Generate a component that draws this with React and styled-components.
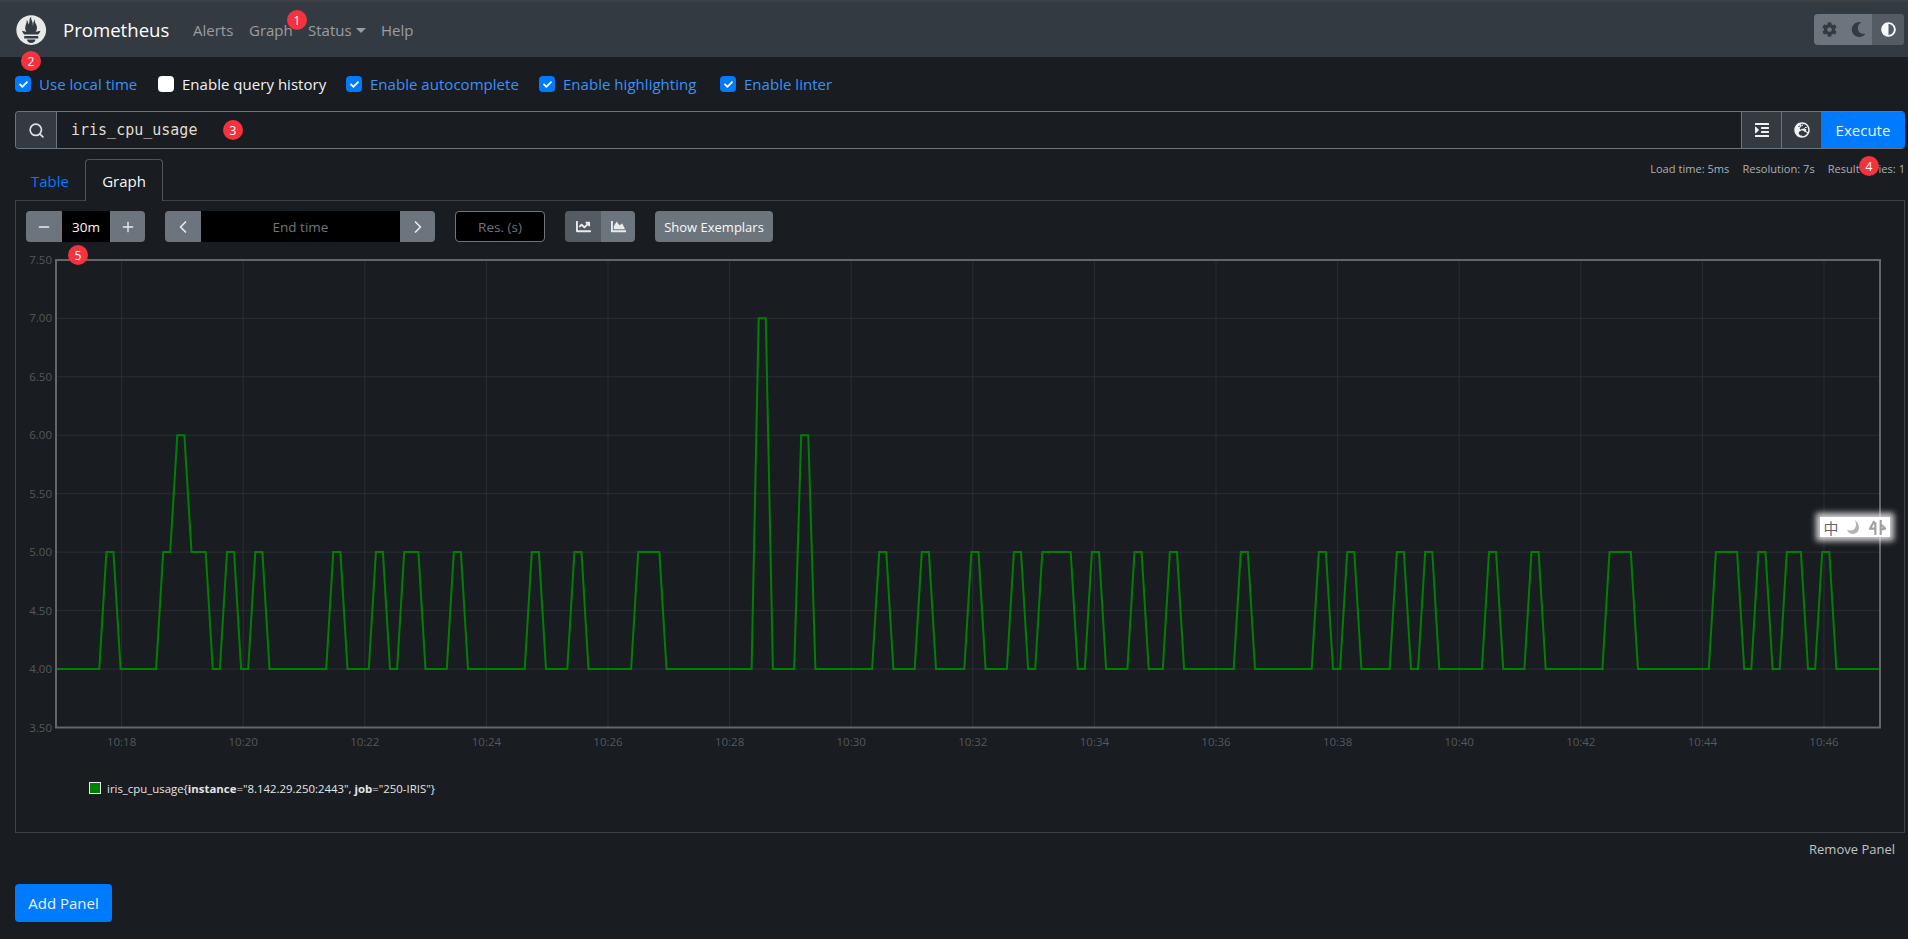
import React from 'react';
import styled, { createGlobalStyle } from 'styled-components';
import {
  FaAdjust, FaChartArea, FaChartLine, FaCheck, FaCog, FaGlobeEurope, FaIndent, FaMoon,
} from 'react-icons/fa';
import { ChevronLeft, ChevronRight, Minus, Plus, Search } from 'lucide-react';

const GlobalStyle = createGlobalStyle`
  html, body { margin: 0; padding: 0; background: #191c21; }
  body {
    font-family: "Open Sans", "Noto Sans", "Liberation Sans", sans-serif;
    font-size: 16px;
    color: #f8f9fa;
    overflow: hidden;
  }
  * { box-sizing: border-box; }
`;

const Page = styled.div`
  position: relative;
  width: 1908px;
  height: 939px;
`;

const NavBar = styled.nav`
  height: 57px;
  padding: 0 4px 0 16px;
  display: flex;
  align-items: center;
  background: #343a41;
  border-top: 2px solid #3f4144;
`;

const Logo = styled.svg`
  width: 31px;
  height: 30px;
  margin-right: 16px;
  fill: #e9e9e9;
`;

const Brand = styled.span`
  font-size: 18.6px;
  color: #fff;
  width: 130px;
`;

const NavLink = styled.span`
  width: ${(p) => p.$width}px;
  font-size: 15px;
  color: rgba(255, 255, 255, 0.5);
`;

const Caret = styled.span`
  display: inline-block;
  margin-left: 4px;
  vertical-align: 3px;
  border-top: 5px solid rgba(255, 255, 255, 0.5);
  border-left: 5px solid transparent;
  border-right: 5px solid transparent;
`;

const ThemeGroup = styled.div`
  margin-left: auto;
  display: flex;
  height: 31px;
  border-radius: 4px;
  overflow: hidden;
  background: #6c757d;
`;

const ThemeButton = styled.span`
  width: ${(p) => p.$width}px;
  display: flex;
  align-items: center;
  justify-content: center;
  font-size: 15px;
  color: ${(p) => (p.$active ? '#f8f9fa' : '#343a40')};
  background: ${(p) => (p.$active ? '#545b62' : 'transparent')};
`;

const Content = styled.main`
  padding: 0 3px 0 15px;
`;

const OptionsRow = styled.div`
  height: 24px;
  margin-top: 15px;
  display: flex;
  align-items: center;
`;

const CheckLabel = styled.label`
  width: ${(p) => p.$width}px;
  display: flex;
  align-items: center;
  gap: 8px;
  font-size: 15px;
  letter-spacing: 0.03px;
  color: ${(p) => (p.$checked ? '#3d91f5' : '#f1f1f1')};
`;

const CheckBox = styled.span`
  width: 16px;
  height: 16px;
  flex: none;
  display: flex;
  align-items: center;
  justify-content: center;
  border-radius: 4px;
  font-size: 9px;
  color: #fff;
  background: ${(p) => (p.$checked ? '#007bff' : '#fff')};
`;

const QueryBar = styled.div`
  height: 38px;
  margin-top: 15px;
  display: flex;
  border: 1px solid #6c757d;
  border-right: none;
  border-radius: 4px;
  overflow: hidden;
`;

const QueryPrefix = styled.span`
  width: 41px;
  display: flex;
  align-items: center;
  justify-content: center;
  background: #343a40;
  border-right: 1px solid #6c757d;
  color: #dfe1e3;
`;

const QueryInput = styled.div`
  flex: 1;
  padding-left: 14px;
  display: flex;
  align-items: center;
  font-family: "DejaVu Sans Mono", monospace;
  font-size: 15px;
  color: #e0dcd0;
`;

const QueryAction = styled.span`
  width: ${(p) => p.$width}px;
  display: flex;
  align-items: center;
  justify-content: center;
  background: #343a40;
  border-left: 1px solid #6c757d;
  font-size: 16px;
  color: #f1f1f1;
`;

const ExecuteButton = styled.span`
  width: 84px;
  margin: -1px 0;
  display: flex;
  align-items: center;
  justify-content: center;
  background: #007bff;
  font-size: 15px;
  color: #e8f2ff;
`;

const TabsRow = styled.div`
  height: 42px;
  margin-top: 10px;
  margin-bottom: -1px;
  display: flex;
  justify-content: space-between;
`;

const Tabs = styled.div`
  display: flex;
`;

const Tab = styled.span`
  width: ${(p) => p.$width}px;
  display: flex;
  align-items: center;
  justify-content: center;
  font-size: 15px;
  color: ${(p) => (p.$active ? '#f8f9fa' : '#007bff')};
  background: ${(p) => (p.$active ? '#191c21' : 'transparent')};
  border: 1px solid ${(p) => (p.$active ? '#51565c' : 'transparent')};
  border-bottom: none;
  border-radius: 4px 4px 0 0;
  position: relative;
  z-index: 1;
`;

const Metrics = styled.div`
  padding-top: 2px;
  display: flex;
  gap: 13px;
  font-size: 11.1px;
  line-height: 16px;
  color: #aab0b6;
`;

const Panel = styled.section`
  height: 633px;
  padding: 10px;
  border: 1px solid #3f4349;
`;

const Controls = styled.div`
  height: 31px;
  display: flex;
`;

const ControlGroup = styled.div`
  display: flex;
  margin-right: 20px;
  border-radius: 4px;
  overflow: hidden;
`;

const StepButton = styled.span`
  width: ${(p) => p.$width}px;
  display: flex;
  align-items: center;
  justify-content: center;
  background: ${(p) => (p.$active ? '#545b62' : '#6c757d')};
  font-size: 15px;
  color: #e9ebed;
`;

const BlackField = styled.span`
  width: ${(p) => p.$width}px;
  display: flex;
  align-items: center;
  justify-content: center;
  background: #000;
  font-size: 13.5px;
  color: ${(p) => (p.$value ? '#f8f9fa' : '#6c757d')};
`;

const ResField = styled(BlackField)`
  margin-right: 20px;
  border: 1px solid #6c757d;
  border-radius: 4px;
`;

const ExemplarsButton = styled.span`
  width: 118px;
  display: flex;
  align-items: center;
  justify-content: center;
  border-radius: 4px;
  background: #6c757d;
  font-size: 13px;
  color: #f8f9fa;
`;

const ChartSvg = styled.svg`
  display: block;
  margin-top: 8px;
`;

const AxisLabel = styled.text`
  font-family: "Open Sans", "Liberation Sans", sans-serif;
  font-size: 11.5px;
  fill: #55585c;
`;

const Legend = styled.div`
  height: 16px;
  margin-top: 30px;
  padding-left: 63px;
  display: flex;
  align-items: center;
  gap: 6px;
  font-size: 11.4px;
  color: #e4e4e4;
`;

const Swatch = styled.span`
  width: 12px;
  height: 12px;
  background: #008000;
  border: 1px solid #e8e8e8;
`;

const PanelFooter = styled.div`
  height: 20px;
  margin-top: 6px;
  padding-right: 10px;
  display: flex;
  align-items: center;
  justify-content: flex-end;
  font-size: 13px;
  color: #c0c2c4;
`;

const AddPanelButton = styled.span`
  width: 97px;
  height: 38px;
  margin-top: 25px;
  display: flex;
  align-items: center;
  justify-content: center;
  border-radius: 4px;
  background: #007bff;
  font-size: 15px;
  color: #e8f2ff;
`;

const Badge = styled.span`
  position: absolute;
  left: ${(p) => p.$x - 10}px;
  top: ${(p) => p.$y - 10}px;
  width: 20px;
  height: 20px;
  display: flex;
  align-items: center;
  justify-content: center;
  border-radius: 50%;
  background: #f5333f;
  font-size: 12px;
  color: #fff;
  z-index: 3;
`;

const ImeWidget = styled.div`
  position: absolute;
  left: 1820px;
  top: 517px;
  width: 70px;
  height: 20px;
  display: flex;
  align-items: center;
  justify-content: space-around;
  background: #fff;
  box-shadow: 0 0 6px 4px rgba(255, 255, 255, 0.8);
  font-family: "Noto Sans CJK SC", sans-serif;
  font-size: 15px;
  line-height: 1;
  color: #666;
  z-index: 3;
`;

const ImeIcon = styled.svg`
  width: 17px;
  height: 17px;
  fill: none;
  stroke: #a0a0a0;
  stroke-width: 2;
`;

// plot area in svg coords (svg starts at x=26, y=250 on the page)
const PLOT = { left: 30, right: 1854, top: 10, bottom: 477.5 };
const STEP = 7.09;
const SAMPLES = 258;

const yFor = (v) => PLOT.bottom - (v - 3.5) * 116.9;
const xTicks = Array.from({ length: 15 }, (_, i) => ({
  x: 95.6 + i * 121.6,
  label: `10:${18 + i * 2}`,
}));
const yTicks = [3.5, 4, 4.5, 5, 5.5, 6, 6.5, 7, 7.5];

// [first sample, last sample, value]; everything else sits at 4
const SPIKES = [
  [7, 8, 5], [15, 16, 5], [17, 18, 6], [19, 21, 5], [24, 25, 5], [28, 29, 5], [39, 40, 5],
  [45, 46, 5], [49, 51, 5], [56, 57, 5], [67, 68, 5], [73, 74, 5], [82, 85, 5], [99, 100, 7],
  [105, 106, 6], [116, 117, 5], [122, 123, 5], [129, 130, 5], [135, 136, 5], [139, 143, 5],
  [146, 147, 5], [152, 153, 5], [157, 158, 5], [167, 168, 5], [178, 179, 5], [182, 183, 5],
  [189, 190, 5], [193, 194, 5], [202, 203, 5], [208, 209, 5], [219, 222, 5], [234, 237, 5],
  [240, 241, 5], [244, 246, 5], [249, 250, 5],
];

const seriesPoints = () => {
  const values = new Array(SAMPLES).fill(4);
  SPIKES.forEach(([from, to, v]) => {
    for (let i = from; i <= to; i++) values[i] = v;
  });
  return values.map((v, i) => `${(PLOT.left + 0.8 + i * STEP).toFixed(1)},${yFor(v).toFixed(1)}`).join(' ');
};

const Chart = () => (
  <ChartSvg width={1869} height={500}>
    {xTicks.map((t) => (
      <line key={t.label} x1={t.x} x2={t.x} y1={PLOT.top} y2={PLOT.bottom} stroke="#2b2f34" />
    ))}
    {yTicks.map((v) => (
      <line key={v} x1={PLOT.left} x2={PLOT.right} y1={yFor(v)} y2={yFor(v)} stroke="#2b2f34" />
    ))}
    <polyline points={seriesPoints()} fill="none" stroke="#008000" strokeWidth="2" />
    <rect
      x={PLOT.left}
      y={PLOT.top}
      width={PLOT.right - PLOT.left}
      height={PLOT.bottom - PLOT.top}
      fill="none"
      stroke="#666"
      strokeWidth="2"
    />
    {yTicks.map((v) => (
      <AxisLabel key={v} x={PLOT.left - 4} y={yFor(v) + 4} textAnchor="end">
        {v.toFixed(2)}
      </AxisLabel>
    ))}
    {xTicks.map((t) => (
      <AxisLabel key={t.label} x={t.x} y={PLOT.bottom + 18} textAnchor="middle">
        {t.label}
      </AxisLabel>
    ))}
  </ChartSvg>
);

const Option = ({ width, checked, children }) => (
  <CheckLabel $width={width} $checked={checked}>
    <CheckBox $checked={checked}>{checked && <FaCheck />}</CheckBox>
    {children}
  </CheckLabel>
);

export default function App() {
  return (
    <Page>
      <GlobalStyle />
      <NavBar>
        <Logo viewBox="0 0 115.333 114">
          <path d="M56.667,0.667C25.372,0.667,0,26.036,0,57.332c0,31.295,25.372,56.666,56.667,56.666s56.666-25.371,56.666-56.666C113.333,26.036,87.961,0.667,56.667,0.667z M56.667,106.722c-8.904,0-16.123-5.948-16.123-13.283H72.79C72.79,100.773,65.571,106.722,56.667,106.722z M83.297,89.04H30.034v-9.658h53.264V89.04z M83.106,74.411H30.186c-0.176-0.203-0.356-0.403-0.526-0.609c-5.452-6.62-6.736-10.076-7.983-13.598c-0.021-0.116,6.611,1.355,11.314,2.413c0,0,2.42,0.56,5.958,1.205c-3.397-3.982-5.414-9.044-5.414-14.218c0-11.359,8.712-21.285,5.569-29.308c3.059,0.249,6.331,6.456,6.552,16.161c3.252-4.494,4.613-12.701,4.613-17.733c0-5.21,3.433-11.262,6.867-11.469c-3.061,5.045,0.793,9.37,4.219,20.099c1.285,4.03,1.121,10.812,2.113,15.113C63.797,33.534,65.333,20.5,71,16c-2.5,5.667,0.37,12.758,2.333,16.167c3.167,5.5,5.087,9.667,5.087,17.548c0,5.284-1.951,10.259-5.242,14.148c3.742-0.702,6.326-1.335,6.326-1.335l12.152-2.371C91.657,60.156,89.891,67.418,83.106,74.411z" fillRule="evenodd" />
        </Logo>
        <Brand>Prometheus</Brand>
        <NavLink $width={56}>Alerts</NavLink>
        <NavLink $width={59}>Graph</NavLink>
        <NavLink $width={73}>Status<Caret /></NavLink>
        <NavLink $width={50}>Help</NavLink>
        <ThemeGroup>
          <ThemeButton $width={30}><FaCog /></ThemeButton>
          <ThemeButton $width={28}><FaMoon /></ThemeButton>
          <ThemeButton $width={32} $active><FaAdjust /></ThemeButton>
        </ThemeGroup>
      </NavBar>

      <Content>
        <OptionsRow>
          <Option width={143} checked>Use local time</Option>
          <Option width={188}>Enable query history</Option>
          <Option width={193} checked>Enable autocomplete</Option>
          <Option width={181} checked>Enable highlighting</Option>
          <Option width={130} checked>Enable linter</Option>
        </OptionsRow>

        <QueryBar>
          <QueryPrefix><Search size={17} strokeWidth={2.4} /></QueryPrefix>
          <QueryInput>iris_cpu_usage</QueryInput>
          <QueryAction $width={40}><FaIndent /></QueryAction>
          <QueryAction $width={40}><FaGlobeEurope /></QueryAction>
          <ExecuteButton>Execute</ExecuteButton>
        </QueryBar>

        <TabsRow>
          <Tabs>
            <Tab $width={70}>Table</Tab>
            <Tab $width={78} $active>Graph</Tab>
          </Tabs>
          <Metrics>
            <span>Load time: 5ms</span>
            <span>Resolution: 7s</span>
            <span>Result series: 1</span>
          </Metrics>
        </TabsRow>

        <Panel>
          <Controls>
            <ControlGroup>
              <StepButton $width={36}><Minus size={16} strokeWidth={2} /></StepButton>
              <BlackField $width={48} $value>30m</BlackField>
              <StepButton $width={35}><Plus size={16} strokeWidth={2} /></StepButton>
            </ControlGroup>
            <ControlGroup>
              <StepButton $width={36}><ChevronLeft size={20} strokeWidth={2} /></StepButton>
              <BlackField $width={199}>End time</BlackField>
              <StepButton $width={35}><ChevronRight size={20} strokeWidth={2} /></StepButton>
            </ControlGroup>
            <ResField $width={90}>Res. (s)</ResField>
            <ControlGroup>
              <StepButton $width={36} $active><FaChartLine /></StepButton>
              <StepButton $width={34}><FaChartArea /></StepButton>
            </ControlGroup>
            <ExemplarsButton>Show Exemplars</ExemplarsButton>
          </Controls>
          <Chart />
          <Legend>
            <Swatch />
            <span>iris_cpu_usage{'{'}<b>instance</b>="8.142.29.250:2443", <b>job</b>="250-IRIS"{'}'}</span>
          </Legend>
        </Panel>
        <PanelFooter>Remove Panel</PanelFooter>
        <AddPanelButton>Add Panel</AddPanelButton>
      </Content>

      <Badge $x={297} $y={20}>1</Badge>
      <Badge $x={31} $y={61}>2</Badge>
      <Badge $x={233} $y={130}>3</Badge>
      <Badge $x={1869} $y={166}>4</Badge>
      <Badge $x={78} $y={255}>5</Badge>

      <ImeWidget>
        <span>中</span>
        <ImeIcon viewBox="0 0 16 16">
          <path d="M9 1c2 3 2 7-1 9-2 1-4 1-6 0 1 4 6 5 9 3 4-3 2-10-2-12z" fill="#b4b4b4" stroke="none" />
        </ImeIcon>
        <ImeIcon viewBox="0 0 16 16">
          <path d="M5 2 1 9h5M6 3v12M11 1v14M11 5l4 4-4 1" />
        </ImeIcon>
      </ImeWidget>
    </Page>
  );
}
